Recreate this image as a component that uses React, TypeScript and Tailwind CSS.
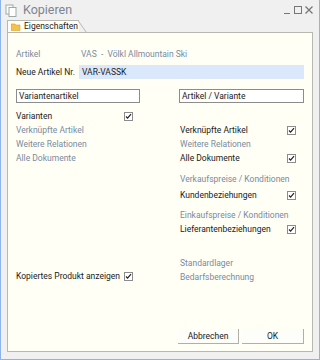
import React from "react";

const font = { fontFamily: 'Roboto, "Liberation Sans", Arial, sans-serif' };

function Check({ on = true }: { on?: boolean }) {
  if (!on) return <span className="w-[9px] h-[9px]" />;
  return (
    <span className="w-[9px] h-[9px] border border-[#8c8c8c] bg-white flex items-center justify-center">
      <svg width="7" height="7" viewBox="0 0 7 7">
        <path d="M1 3.5 L2.6 5.2 L6 1.2" fill="none" stroke="#222" strokeWidth="1.2" />
      </svg>
    </span>
  );
}

function Row({
  label,
  dim,
  check,
}: {
  label: string;
  dim?: boolean;
  check?: boolean;
}) {
  return (
    <div className="h-[14px] flex items-center justify-between">
      <span className={dim ? "text-[#7a8aa0]" : "text-[#1a1a1a]"}>{label}</span>
      {check && <Check />}
    </div>
  );
}

export default function App() {
  return (
    <div
      className="w-[320px] h-[360px] bg-[#f0f0f0] border-l border-r border-b border-[#8cb4ec] flex flex-col text-[8.5px] overflow-hidden"
      style={font}
    >
      <div className="h-[20px] flex items-center pl-[4px] pr-[6px]">
        <svg width="13" height="13" viewBox="0 0 13 13">
          <rect x="1" y="1" width="7" height="9" fill="#fff" stroke="#9aa" />
          <rect x="4" y="3.5" width="7" height="9" fill="#fff" stroke="#9aa" />
        </svg>
        <span className="ml-[5px] text-[12.5px] text-[#7b8593]">Kopieren</span>
        <div className="ml-auto flex items-center gap-[3px] text-[#777]">
          <svg width="7" height="8" viewBox="0 0 7 8">
            <path d="M0 7.5 H6" stroke="#777" />
          </svg>
          <svg width="8" height="8" viewBox="0 0 8 8">
            <rect x="0.5" y="0.5" width="7" height="7" fill="none" stroke="#777" />
          </svg>
          <svg width="8" height="8" viewBox="0 0 8 8">
            <path d="M0.5 0.5 L7.5 7.5 M7.5 0.5 L0.5 7.5" stroke="#777" strokeWidth="1.3" />
          </svg>
        </div>
      </div>

      <div className="h-[12px] pl-[6px] flex items-end">
        <div className="h-[12px] w-[72px] bg-[#fffff6] border-t border-l border-[#b8b8b0] flex items-center pl-[3px] relative">
          <svg width="10" height="8" viewBox="0 0 10 8">
            <path d="M0 1 H4 L5 2 H9 V7.5 H0 Z" fill="#f3c24a" stroke="#d9a030" strokeWidth="0.6" />
          </svg>
          <span className="ml-[3px] text-[#1a1a1a]">Eigenschaften</span>
          <svg className="absolute right-[-8px] top-[-1px]" width="9" height="13" viewBox="0 0 9 13">
            <path d="M0 0.5 L8.5 12.5" stroke="#b8b8b0" />
          </svg>
        </div>
      </div>

      <div className="flex-1 mx-[6px] mb-[7px] bg-[#fffff6] border border-[#b8b8b0] flex flex-col px-[8px]">
        <div className="mt-[14px] h-[14px] flex items-center">
          <span className="w-[65px] text-[#7a8aa0]">Artikel</span>
          <span className="text-[#7a8aa0]">VAS&nbsp; - &nbsp;Völkl Allmountain Ski</span>
        </div>
        <div className="mt-[4px] h-[14px] flex items-center">
          <span className="w-[63px] text-[#1a1a1a]">Neue Artikel Nr.</span>
          <div className="flex-1 h-[14px] bg-[#dbe8fb] flex items-center pl-[3px] text-[#1a1a1a]">
            VAR-VASSK
          </div>
        </div>

        <div className="mt-[10px] flex justify-between">
          <div className="w-[124px] h-[14px] border border-[#8c8c8c] bg-white flex items-center pl-[2px] text-[#1a1a1a]">
            Variantenartikel
          </div>
          <div className="w-[125px] h-[14px] border border-[#8c8c8c] bg-white flex items-center pl-[2px] text-[#1a1a1a]">
            Artikel / Variante
          </div>
        </div>

        <div className="mt-[6px] flex justify-between">
          <div className="w-[117px] flex flex-col">
            <Row label="Varianten" check />
            <Row label="Verknüpfte Artikel" dim />
            <Row label="Weitere Relationen" dim />
            <Row label="Alle Dokumente" dim />
            <div className="mt-[104px]">
              <Row label="Kopiertes Produkt anzeigen" check />
            </div>
          </div>
          <div className="w-[116px] mr-[8px] flex flex-col">
            <div className="h-[14px]" />
            <Row label="Verknüpfte Artikel" check />
            <Row label="Weitere Relationen" dim />
            <Row label="Alle Dokumente" check />
            <div className="mt-[7px]">
              <Row label="Verkaufspreise / Konditionen" dim />
            </div>
            <div className="mt-[2px]">
              <Row label="Kundenbeziehungen" check />
            </div>
            <div className="mt-[6px]">
              <Row label="Einkaufspreise / Konditionen" dim />
            </div>
            <Row label="Lieferantenbeziehungen" check />
            <div className="mt-[20px]">
              <Row label="Standardlager" dim />
            </div>
            <Row label="Bedarfsberechnung" dim />
          </div>
        </div>

        <div className="mt-auto mb-[7px] flex justify-end gap-[3px]">
          <button className="w-[61px] h-[15px] bg-[#fdfdfa] border-r border-b border-[#b0b0a8] text-[#1a1a1a]">
            Abbrechen
          </button>
          <button className="w-[62px] h-[15px] bg-[#fdfdfa] border-r border-b border-[#b0b0a8] text-[#1a1a1a]">
            OK
          </button>
        </div>
      </div>
    </div>
  );
}
